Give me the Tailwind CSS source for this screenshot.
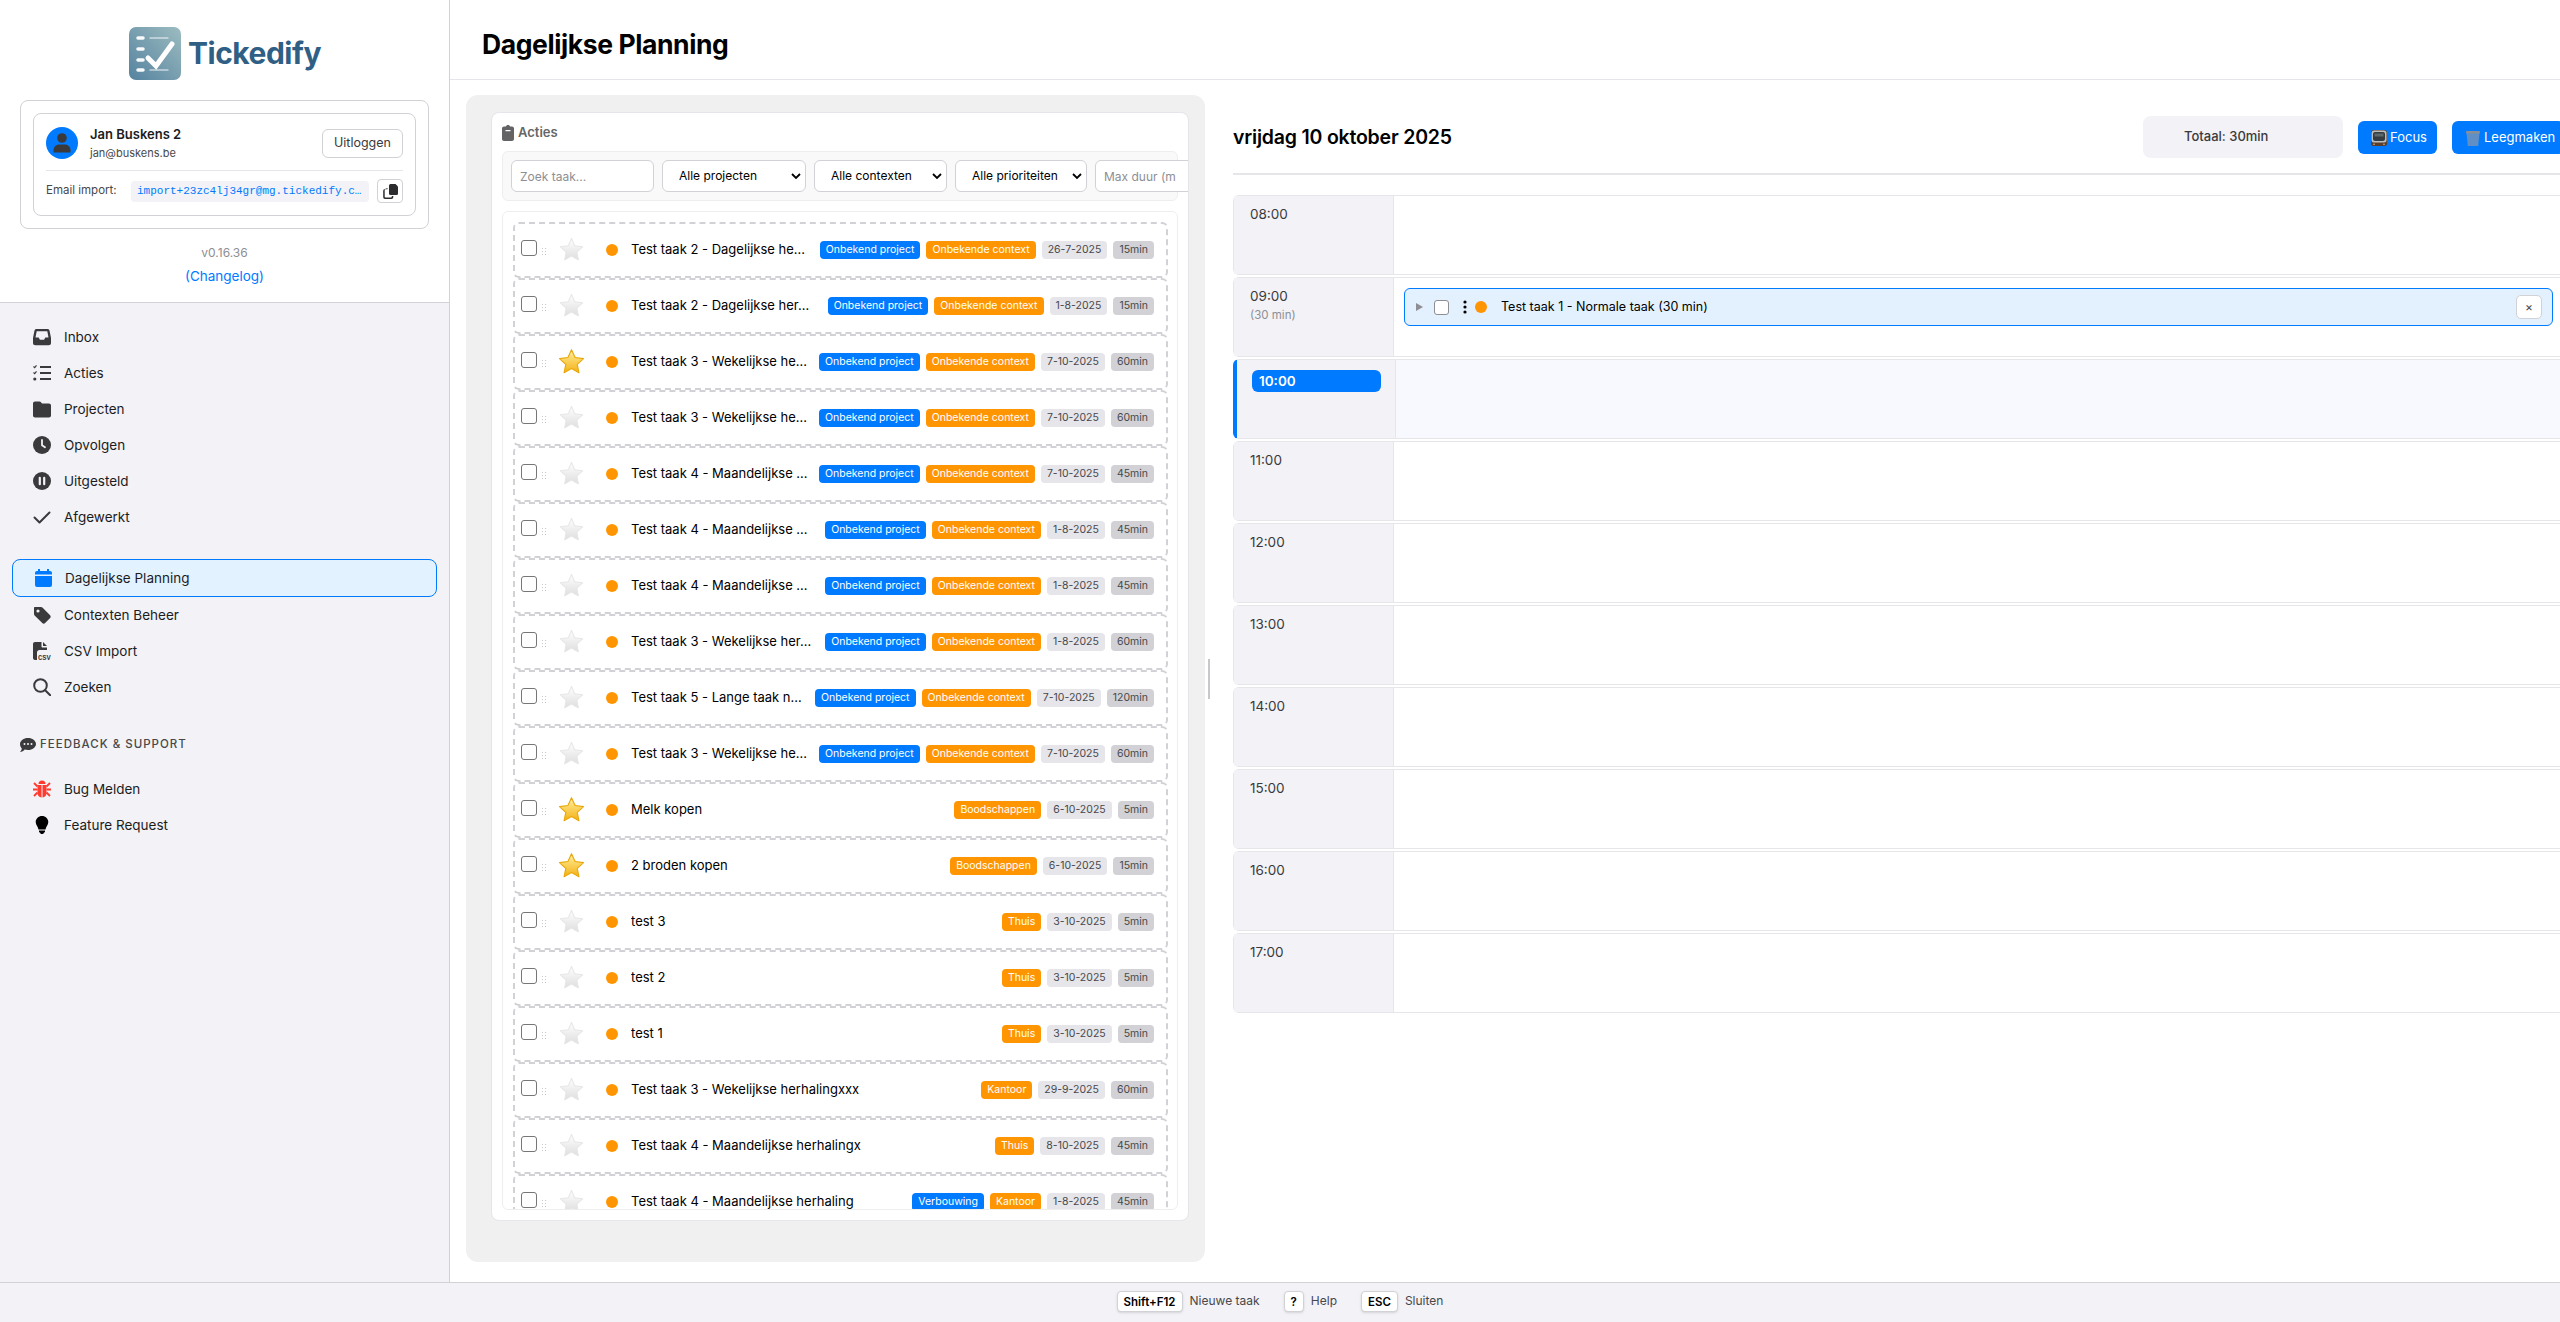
<!DOCTYPE html>
<html lang="nl">
<head>
    <meta charset="UTF-8">
    <title>Tickedify - Dagelijkse Planning</title>
    <script src="https://cdn.jsdelivr.net/npm/@tailwindcss/browser@4"></script>
</head>
<body class="h-screen overflow-hidden flex flex-col bg-white text-[#1c1c1e] font-['Inter','Noto_Sans',sans-serif]">
    <div class="flex flex-1 min-h-0">
        <!-- Sidebar -->
        <aside class="w-[450px] shrink-0 border-r border-[#d1d1d6] bg-[#f2f2f7] flex flex-col">
            <div class="h-[303px] shrink-0 bg-white border-b border-[#d1d1d6] pt-[27px] px-5">
                <div class="flex items-center h-[53px] pl-[109px] gap-[7px]">
                    <svg width="52" height="53" viewBox="0 0 52 53">
                        <defs>
                            <linearGradient id="logoBg" x1="0" y1="1" x2="1" y2="0">
                                <stop offset="0" stop-color="#55829f"/>
                                <stop offset="1" stop-color="#9cbcc0"/>
                            </linearGradient>
                        </defs>
                        <rect x="0" y="0" width="52" height="53" rx="7" fill="url(#logoBg)"/>
                        <g stroke="#fff" stroke-linecap="round" fill="none">
                            <path d="M9 11h5M9 22h5M9 33h5M9 43h5" stroke-width="3.5" opacity=".95"/>
                            <path d="M21 11h18M21 43h18" stroke-width="1.2" opacity=".9"/>
                            <path d="M19 31l8 8L43 17" stroke-width="5"/>
                        </g>
                    </svg>
                    <span class="text-[30px] font-bold tracking-[-0.5px] text-[#2f5f85]">Tickedify</span>
                </div>
                <div class="mt-5 h-[129px] rounded-lg border border-[#d1d1d6] p-3">
                    <div class="h-[103px] rounded-lg border border-[#d1d1d6] px-3 pt-[14px]">
                        <div class="flex items-center h-[30px]">
                            <div class="w-8 h-8 rounded-full bg-[#007aff] flex items-center justify-center">
                                <svg width="18" height="20" viewBox="0 0 18 20" fill="#3a3a3c"><circle cx="9" cy="5" r="4.8"/><path d="M0.5 19.5v-2.5c0-3 2.500-5.500 5.500-5.500h6c3 0 5.500 2.500 5.500 5.500v2.500z"/></svg>
                            </div>
                            <div class="ml-3 flex-1">
                                <div class="text-[13px] leading-[18px] font-semibold">Jan Buskens 2</div>
                                <div class="text-[11px] leading-4 text-[#48484a] mt-[2px]">jan@buskens.be</div>
                            </div>
                            <button class="w-[81px] h-[29px] rounded-md border border-[#d1d1d6] bg-white text-[12.5px] text-[#3a3a3c]">Uitloggen</button>
                        </div>
                        <div class="mt-[12px] border-t border-[#e5e5ea] pt-2 flex items-center">
                            <span class="w-[85px] text-[11.5px] text-[#48484a]">Email import:</span>
                            <code class="w-[238px] h-[21px] rounded bg-[#f2f2f7] px-[6px] text-[11px] leading-[21px] text-[#007aff] font-['Liberation_Mono',monospace] whitespace-nowrap overflow-hidden">import+23zc4lj34gr@mg.tickedify.c…</code>
                            <button class="ml-2 w-[26px] h-6 rounded border border-[#d1d1d6] bg-white flex items-center justify-center">
                                <svg width="15" height="15" viewBox="0 0 15 15" fill="#2c2c2e"><path d="M6 1.500a1.500 1.500 0 0 1 1.500-1.500h5l2.500 2.500v7a1.500 1.500 0 0 1-1.500 1.500h-6a1.500 1.500 0 0 1-1.500-1.500z"/><path d="M4.500 4v1.200h-2a.8.8 0 0 0-.8.8v6.800c0 .5.300.8.800.8h5.500c.5 0 .8-.3.8-.8v-.8h1.500v1.200a1.800 1.800 0 0 1-1.800 1.800h-6.500a1.800 1.800 0 0 1-1.800-1.800v-6.500a1.800 1.800 0 0 1 1.800-1.800z"/></svg>
                            </button>
                        </div>
                    </div>
                </div>
                <div class="mt-[16px] text-center text-[12px] leading-4 text-[#8e8e93]">v0.16.36</div>
                <div class="mt-[7px] text-center text-[13.5px] leading-4 text-[#007aff]">(Changelog)</div>
            </div>

            <nav class="pt-[16px] flex flex-col">
                <a class="h-9 pl-[33px] flex items-center gap-[13px] text-[13.5px]">
                    <svg class="w-[18px] h-[18px]" viewBox="0 0 18 18" fill="#3a3a3c"><path fill-rule="evenodd" d="M3.500 1h11c1 0 1.700.6 2 1.500L18 10v5c0 1.300-1 2.300-2.300 2.300H2.300C1 17.300 0 16.300 0 15v-5l1.500-7.500C1.800 1.600 2.500 1 3.500 1zM3.700 3.200L2.500 9.500h3.200l1.200 2.300h4.200l1.200-2.300h3.200L14.300 3.200z"/></svg>
                    Inbox
                </a>
                <a class="h-9 pl-[33px] flex items-center gap-[13px] text-[13.5px]">
                    <svg class="w-[18px] h-[18px]" viewBox="0 0 18 18" fill="#3a3a3c"><path d="M7 2h11v2H7zM7 8h11v2H7zM7 14h11v2H7z"/><path d="M.5 2.500l1.200 1.200L3.500 1.300M.5 8.500l1.200 1.200 1.800-2.400" fill="none" stroke="#3a3a3c" stroke-width="1.100"/><circle cx="1.800" cy="15" r="1.600"/></svg>
                    Acties
                </a>
                <a class="h-9 pl-[33px] flex items-center gap-[13px] text-[13.5px]">
                    <svg class="w-[18px] h-[18px]" viewBox="0 0 18 18" fill="#3a3a3c"><path d="M2 1.500h4.500c.5 0 1 .2 1.300.6L9 3.500h7c1.100 0 2 .9 2 2v10c0 1.100-.9 2-2 2H2c-1.100 0-2-.9-2-2v-12c0-1.100.9-2 2-2z"/></svg>
                    Projecten
                </a>
                <a class="h-9 pl-[33px] flex items-center gap-[13px] text-[13.5px]">
                    <svg class="w-[18px] h-[18px]" viewBox="0 0 18 18"><circle cx="9" cy="9" r="9" fill="#3a3a3c"/><path d="M9 4v5.200l3 2" fill="none" stroke="#f2f2f7" stroke-width="1.800" stroke-linecap="round" stroke-linejoin="round"/></svg>
                    Opvolgen
                </a>
                <a class="h-9 pl-[33px] flex items-center gap-[13px] text-[13.5px]">
                    <svg class="w-[18px] h-[18px]" viewBox="0 0 18 18"><circle cx="9" cy="9" r="9" fill="#3a3a3c"/><path d="M6.800 5.800v6.400M11.200 5.800v6.400" stroke="#f2f2f7" stroke-width="2.200" stroke-linecap="round"/></svg>
                    Uitgesteld
                </a>
                <a class="h-9 pl-[33px] flex items-center gap-[13px] text-[13.5px]">
                    <svg class="w-[18px] h-[18px]" viewBox="0 0 18 18"><path d="M1.500 9.500l5 5L16.500 4.500" fill="none" stroke="#3a3a3c" stroke-width="2" stroke-linecap="round" stroke-linejoin="round"/></svg>
                    Afgewerkt
                </a>

                <a class="mt-[24px] mx-3 w-[425px] h-[38px] pl-[22px] flex items-center gap-[13px] text-[13.5px] rounded-lg border border-[#007aff] bg-[#e3f2ff]">
                    <svg class="w-[17px] h-[18px]" viewBox="0 0 17 18" fill="#007aff"><path d="M3 0h2v2h7V0h2v2h1a2 2 0 0 1 2 2v1.500H0V4a2 2 0 0 1 2-2h1zM0 7h17v9a2 2 0 0 1-2 2H2a2 2 0 0 1-2-2z"/></svg>
                    Dagelijkse Planning
                </a>
                <a class="h-9 pl-[33px] flex items-center gap-[13px] text-[13.5px]">
                    <svg class="w-[18px] h-[18px]" viewBox="0 0 18 18" fill="#3a3a3c"><path fill-rule="evenodd" d="M2 1h6c.5 0 1 .2 1.400.6l7.700 7.700c.8.800.8 2 0 2.800l-5 5c-.8.800-2 .8-2.800 0L1.600 9.400C1.200 9 1 8.500 1 8V2c0-.6.400-1 1-1zM5 3.400a1.600 1.600 0 1 0 0 3.200 1.600 1.600 0 0 0 0-3.200z"/></svg>
                    Contexten Beheer
                </a>
                <a class="h-9 pl-[33px] flex items-center gap-[13px] text-[13.5px]">
                    <svg class="w-[18px] h-[18px]" viewBox="0 0 18 18" fill="#3a3a3c"><path d="M2 0h6.500v4.500c0 .6.400 1 1 1H14V8H6.500C5.100 8 4 9.100 4 10.500V18H2c-1.100 0-2-.9-2-2V2C0 .9.900 0 2 0zM10 0l4 4h-4z"/><text x="5" y="17.500" font-size="7" font-weight="700" font-family="Liberation Mono, monospace">CSV</text></svg>
                    CSV Import
                </a>
                <a class="h-9 pl-[33px] flex items-center gap-[13px] text-[13.5px]">
                    <svg class="w-[18px] h-[18px]" viewBox="0 0 18 18" fill="none" stroke="#3a3a3c" stroke-width="2" stroke-linecap="round"><circle cx="7.500" cy="7.500" r="6.300"/><path d="M12.200 12.200l5 5"/></svg>
                    Zoeken
                </a>
                <div class="mt-[28px] h-6 pl-5 flex items-center gap-[4px] text-[11.5px] font-medium tracking-[1px] text-[#48484a]">
                    <svg class="w-4 h-[14px]" viewBox="0 0 16 14" fill="#3a3a3c"><path fill-rule="evenodd" d="M8 0c4.400 0 8 2.700 8 6s-3.600 6-8 6c-1.200 0-2.300-.2-3.300-.5C3.600 12.700 2 14 0 14c1-1 1.700-2.200 1.800-3.500C.7 9.400 0 7.800 0 6c0-3.300 3.600-6 8-6zM4.500 5a1 1 0 1 0 0 2 1 1 0 0 0 0-2zM8 5a1 1 0 1 0 0 2 1 1 0 0 0 0-2zM11.500 5a1 1 0 1 0 0 2 1 1 0 0 0 0-2z"/></svg>
                    FEEDBACK &amp; SUPPORT
                </div>
                <a class="mt-[14px] h-9 pl-[33px] flex items-center gap-[13px] text-[13.5px]">
                    <svg class="w-[18px] h-[18px]" viewBox="0 0 18 18" fill="#ff3b30"><path d="M5.500 4a3.500 3.500 0 0 1 7 0z"/><path d="M4.500 5h4v12.500c-2.500-.2-4-2-4-4.500zM9.500 5h4v8c0 2.500-1.500 4.300-4 4.500z"/><path d="M1 3l3.500 3.500M17 3l-3.500 3.500M0 9.500h4.500M18 9.500h-4.500M1 16l3.500-3.500M17 16l-3.500-3.500" stroke="#ff3b30" stroke-width="1.800"/></svg>
                    Bug Melden
                </a>
                <a class="h-9 pl-[33px] flex items-center gap-[13px] text-[13.5px]">
                    <svg class="w-[18px] h-[18px]" viewBox="0 0 18 18" fill="#000"><path d="M9 0c3.500 0 6.300 2.700 6.300 6 0 3-2.300 4.300-2.800 7.500h-7C5 10.300 2.700 9 2.700 6 2.700 2.700 5.500 0 9 0z"/><path d="M6 14.500h6v1c0 .6-.4 1-1 1-.3 1-1 1.500-2 1.500s-1.700-.5-2-1.500c-.6 0-1-.4-1-1z"/></svg>
                    Feature Request
                </a>
            </nav>
        </aside>

        <!-- Main -->
        <main class="flex-1 min-w-0 flex flex-col">
            <header class="h-[80px] shrink-0 border-b border-[#e5e5ea] pl-[32px] flex items-center">
                <h1 class="text-[26.500px] font-bold tracking-[-0.4px] text-black mt-[10px]">Dagelijkse Planning</h1>
            </header>
            <div class="flex flex-1 min-h-0">
                <!-- Acties panel -->
                <div class="relative w-[783px] shrink-0 pl-[16px] pt-[15px]">
                    <section class="w-[739px] h-[1167px] rounded-xl bg-[#f0f0f0] pl-[25px] pt-[17px]">
                        <div class="w-[698px] h-[1109px] rounded-lg border border-[#e5e5ea] bg-white px-[10px] overflow-hidden">
                            <div class="h-[38px] pt-[2px] flex items-center gap-1 text-[13px] font-semibold text-[#666]">
                                <svg class="w-3 h-4" viewBox="0 0 12 16" fill="#636366"><path fill-rule="evenodd" d="M4 1.500C4 .7 4.900 0 6 0s2 .7 2 1.500h2c1.100 0 2 .9 2 2V14c0 1.100-.9 2-2 2H2c-1.100 0-2-.9-2-2V3.500c0-1.100.9-2 2-2zM3.500 5v1.200h5V5z"/></svg>
                                Acties
                            </div>
                            <div class="h-[50px] w-[676px] rounded-md border border-[#eeeeee] bg-[#f9f9f9] pl-2 flex items-center gap-2 overflow-visible">
                                <input class="w-[143px] h-8 shrink-0 rounded-md border border-[#d1d1d6] bg-white px-2 text-[12px] placeholder:text-[#8e8e93]" placeholder="Zoek taak...">
                                <div class="w-[144px] h-8 shrink-0 rounded-md border border-[#d1d1d6] bg-white pl-4 pr-[4px] flex items-center justify-between text-[12px] text-black">Alle projecten
                                    <svg width="10" height="7" viewBox="0 0 10 7" fill="none" stroke="#000" stroke-width="1.800"><path d="M1 1l4 4 4-4"/></svg></div>
                                <div class="w-[133px] h-8 shrink-0 rounded-md border border-[#d1d1d6] bg-white pl-4 pr-[4px] flex items-center justify-between text-[12px] text-black">Alle contexten
                                    <svg width="10" height="7" viewBox="0 0 10 7" fill="none" stroke="#000" stroke-width="1.800"><path d="M1 1l4 4 4-4"/></svg></div>
                                <div class="w-[132px] h-8 shrink-0 rounded-md border border-[#d1d1d6] bg-white pl-4 pr-[4px] flex items-center justify-between text-[12px] text-black">Alle prioriteiten
                                    <svg width="10" height="7" viewBox="0 0 10 7" fill="none" stroke="#000" stroke-width="1.800"><path d="M1 1l4 4 4-4"/></svg></div>
                                <input class="w-[120px] h-8 shrink-0 rounded-md border border-[#d1d1d6] bg-white px-2 text-[12px] placeholder:text-[#8e8e93]" placeholder="Max duur (m">
                            </div>
                            <div id="actionList" class="mt-[10px] w-[676px] h-[999px] rounded-md border border-[#eeeeee] pt-[10px] pl-[10px] overflow-hidden"></div>
                        </div>
                    </section>
                    <div class="absolute left-[758px] top-[579px] w-[2px] h-[40px] bg-[#c7c7cc]"></div>
                </div>

                <!-- Dagkalender -->
                <div class="flex-1 min-w-0 overflow-hidden">
                    <div class="h-[95px] border-b-2 border-[#e5e5ea] flex items-start">
                        <h2 class="mt-[45px] text-[19.500px] leading-6 font-semibold text-black tracking-[-0.2px]">vrijdag 10 oktober 2025</h2>
                        <div class="ml-auto mt-[36px] w-[200px] h-[42px] rounded-lg bg-[#f2f2f7] pl-[41px] flex items-center text-[13px] font-medium text-[#3a3a3c]">Totaal: 30min</div>
                        <button class="ml-[15px] mt-[41px] w-[79px] h-[33px] pl-[13px] rounded-md bg-[#007aff] text-white text-[13px] flex items-center gap-[3px]">
                            <svg width="16" height="16" viewBox="0 0 16 16"><rect x="0" y="0" width="16" height="16" rx="2.500" fill="#5a3f2c"/><rect x="0.500" y="0.500" width="15" height="12" rx="2.500" fill="#b9bec2"/><rect x="2" y="2" width="12" height="9" rx="2" fill="#333b40"/><path d="M3.500 3.500h9v3h-9z" fill="#5c686c"/><circle cx="3" cy="14.300" r=".8" fill="#d9b98f"/><circle cx="13" cy="14.300" r=".8" fill="#d9b98f"/></svg>
                            Focus
                        </button>
                        <button class="ml-[15px] mr-[-4px] mt-[41px] w-[112px] shrink-0 h-[33px] pl-[13px] rounded-md bg-[#007aff] text-white text-[13px] flex items-center gap-[3px]">
                            <svg width="16" height="16" viewBox="0 0 16 16"><path d="M1.500 3h13l-1.300 13H2.800z" fill="#5f8fc4"/><rect x="1" y="1" width="14" height="2.500" rx="1" fill="#8a8f96"/></svg>
                            Leegmaken
                        </button>
                    </div>
                    <div id="slots" class="mt-[20px] flex flex-col gap-[2px] w-[1340px]"></div>
                </div>
            </div>
        </main>
    </div>

    <footer class="h-10 shrink-0 border-t border-[#d1d1d6] bg-[#f2f2f7] flex justify-center items-start pt-2 gap-[24px] text-[12px] text-[#48484a]">
        <div class="flex items-start gap-[7px]">
            <kbd class="h-[21px] px-[6px] rounded border border-[#d1d1d6] bg-white shadow-sm text-[11.500px] leading-[20px] font-semibold text-black font-['Inter',sans-serif]">Shift+F12</kbd>
            <span class="leading-[19px]">Nieuwe taak</span>
        </div>
        <div class="flex items-start gap-[7px]">
            <kbd class="h-[21px] px-[6px] rounded border border-[#d1d1d6] bg-white shadow-sm text-[11.500px] leading-[20px] font-semibold text-black font-['Inter',sans-serif]">?</kbd>
            <span class="leading-[19px]">Help</span>
        </div>
        <div class="flex items-start gap-[7px]">
            <kbd class="h-[21px] px-[6px] rounded border border-[#d1d1d6] bg-white shadow-sm text-[11.500px] leading-[20px] font-semibold text-black font-['Inter',sans-serif]">ESC</kbd>
            <span class="leading-[19px]">Sluiten</span>
        </div>
    </footer>

    <script>
        const P = "Onbekend project", C = "Onbekende context";
        const acties = [
            ["Test taak 2 - Dagelijkse he…", P, C, "26-7-2025", "15min", 0],
            ["Test taak 2 - Dagelijkse her…", P, C, "1-8-2025", "15min", 0],
            ["Test taak 3 - Wekelijkse he…", P, C, "7-10-2025", "60min", 1],
            ["Test taak 3 - Wekelijkse he…", P, C, "7-10-2025", "60min", 0],
            ["Test taak 4 - Maandelijkse …", P, C, "7-10-2025", "45min", 0],
            ["Test taak 4 - Maandelijkse …", P, C, "1-8-2025", "45min", 0],
            ["Test taak 4 - Maandelijkse …", P, C, "1-8-2025", "45min", 0],
            ["Test taak 3 - Wekelijkse her…", P, C, "1-8-2025", "60min", 0],
            ["Test taak 5 - Lange taak n…", P, C, "7-10-2025", "120min", 0],
            ["Test taak 3 - Wekelijkse he…", P, C, "7-10-2025", "60min", 0],
            ["Melk kopen", "", "Boodschappen", "6-10-2025", "5min", 1],
            ["2 broden kopen", "", "Boodschappen", "6-10-2025", "15min", 1],
            ["test 3", "", "Thuis", "3-10-2025", "5min", 0],
            ["test 2", "", "Thuis", "3-10-2025", "5min", 0],
            ["test 1", "", "Thuis", "3-10-2025", "5min", 0],
            ["Test taak 3 - Wekelijkse herhalingxxx", "", "Kantoor", "29-9-2025", "60min", 0],
            ["Test taak 4 - Maandelijkse herhalingx", "", "Thuis", "8-10-2025", "45min", 0],
            ["Test taak 4 - Maandelijkse herhaling", "Verbouwing", "Kantoor", "1-8-2025", "45min", 0]
        ];

        function star(gold, i) {
            const top = gold ? "#fff0a0" : "#ffffff";
            const bottom = gold ? "#f5b014" : "#dedede";
            const line = gold ? "#e8a80c" : "#e6e6e6";
            const size = gold ? 27 : 25;
            return `<svg width="${size}" height="${size}" viewBox="0 0 24 24">
                <defs><linearGradient id="star${i}" x1="0" y1="0" x2="0" y2="1"><stop offset="0" stop-color="${top}"/><stop offset="1" stop-color="${bottom}"/></linearGradient></defs>
                <path d="M12 1.500l3.200 7 7.500.9-5.600 5.100 1.500 7.500L12 18.200l-6.600 3.800 1.500-7.500L1.300 9.400l7.500-.9z" fill="url(#star${i})" stroke="${line}" stroke-width="1" stroke-linejoin="round"/></svg>`;
        }

        document.getElementById("actionList").innerHTML = acties.map((a, i) => `
            <div class="relative h-[56px] w-[655px] rounded-md border-2 border-dashed border-[#d1d1d6] flex items-center text-[13px] text-black">
                <span class="absolute left-[6px] top-[16px] w-4 h-4 rounded-[3px] border border-[#76767a] bg-white"></span>
                <span class="absolute left-[26px] top-[23px] w-[6px] h-[8px] bg-[radial-gradient(#c7c7cc_1px,transparent_1px)] bg-[length:3px_3px]"></span>
                <span class="absolute left-[43px] top-[12px] w-[27px] h-[27px] flex items-center justify-center">${star(a[5], i)}</span>
                <span class="absolute left-[91px] top-[20px] w-3 h-3 rounded-full bg-[#ff9500]"></span>
                <span class="ml-[116px] flex-1 min-w-0 whitespace-nowrap overflow-hidden">${a[0]}</span>
                <span class="flex items-center gap-[6px] mr-[12px] text-[10.5px] leading-[18px] shrink-0">
                    ${a[1] ? `<span class="h-[18px] px-[6px] rounded bg-[#007aff] text-white">${a[1]}</span>` : ""}
                    <span class="h-[18px] px-[6px] rounded bg-[#ff9500] text-white">${a[2]}</span>
                    <span class="h-[18px] px-[6px] rounded bg-[#e5e5ea] text-[#48484a]">${a[3]}</span>
                    <span class="h-[18px] px-[6px] rounded bg-[#d1d1d6] text-[#48484a]">${a[4]}</span>
                </span>
            </div>`).join("");

        const uren = ["08:00", "09:00", "10:00", "11:00", "12:00", "13:00", "14:00", "15:00", "16:00", "17:00"];
        document.getElementById("slots").innerHTML = uren.map(u => {
            if (u === "10:00") {
                return `<div class="h-[80px] flex rounded-l-md border border-[#e5e5ea] border-l-4 border-l-[#007aff] bg-[#f7f9fe]">
                    <div class="w-[159px] shrink-0 bg-[#f2f2f7] border-r border-[#e5e5ea] pl-[15px] pt-[10px]">
                        <div class="w-[129px] h-[22px] rounded-md bg-[#007aff] pl-[7px] text-[13.5px] leading-[22px] font-semibold text-white">10:00</div>
                    </div>
                </div>`;
            }
            const taak = u === "09:00" ? `
                <div class="mt-[10px] ml-[10px] w-[1149px] h-[38px] rounded-md border border-[#007aff] bg-[#e3f0fd] flex items-center text-[12.5px] text-black">
                    <svg class="ml-[11px]" width="7" height="8" viewBox="0 0 7 8" fill="#8e8e93"><path d="M0 0l7 4-7 4z"/></svg>
                    <span class="ml-[11px] w-[15px] h-[15px] rounded-[3px] border border-[#8e8e93] bg-white"></span>
                    <svg class="ml-[14px]" width="4" height="16" viewBox="0 0 4 16" fill="#000"><circle cx="2" cy="3" r="1.600"/><circle cx="2" cy="8" r="1.600"/><circle cx="2" cy="13" r="1.600"/></svg>
                    <span class="ml-[8px] w-3 h-3 rounded-full bg-[#ff9500]"></span>
                    <span class="ml-[14px] flex-1">Test taak 1 - Normale taak (30 min)</span>
                    <span class="mr-[10px] w-[26px] h-6 rounded-[5px] border border-[#d1d1d6] bg-white flex items-center justify-center text-[12px] text-[#48484a]">×</span>
                </div>` : "";
            const sub = u === "09:00" ? `<div class="mt-[2px] text-[11.5px] leading-4 text-[#8e8e93]">(30 min)</div>` : "";
            return `<div class="h-[80px] flex rounded-l-md border border-[#e5e5ea]">
                <div class="w-[160px] shrink-0 bg-[#f2f2f7] border-r border-[#e5e5ea] pl-[16px] pt-[9px]">
                    <div class="text-[13.5px] leading-[18px] text-[#3a3a3c]">${u}</div>${sub}
                </div>
                <div class="flex-1">${taak}</div>
            </div>`;
        }).join("");
    </script>
</body>
</html>
